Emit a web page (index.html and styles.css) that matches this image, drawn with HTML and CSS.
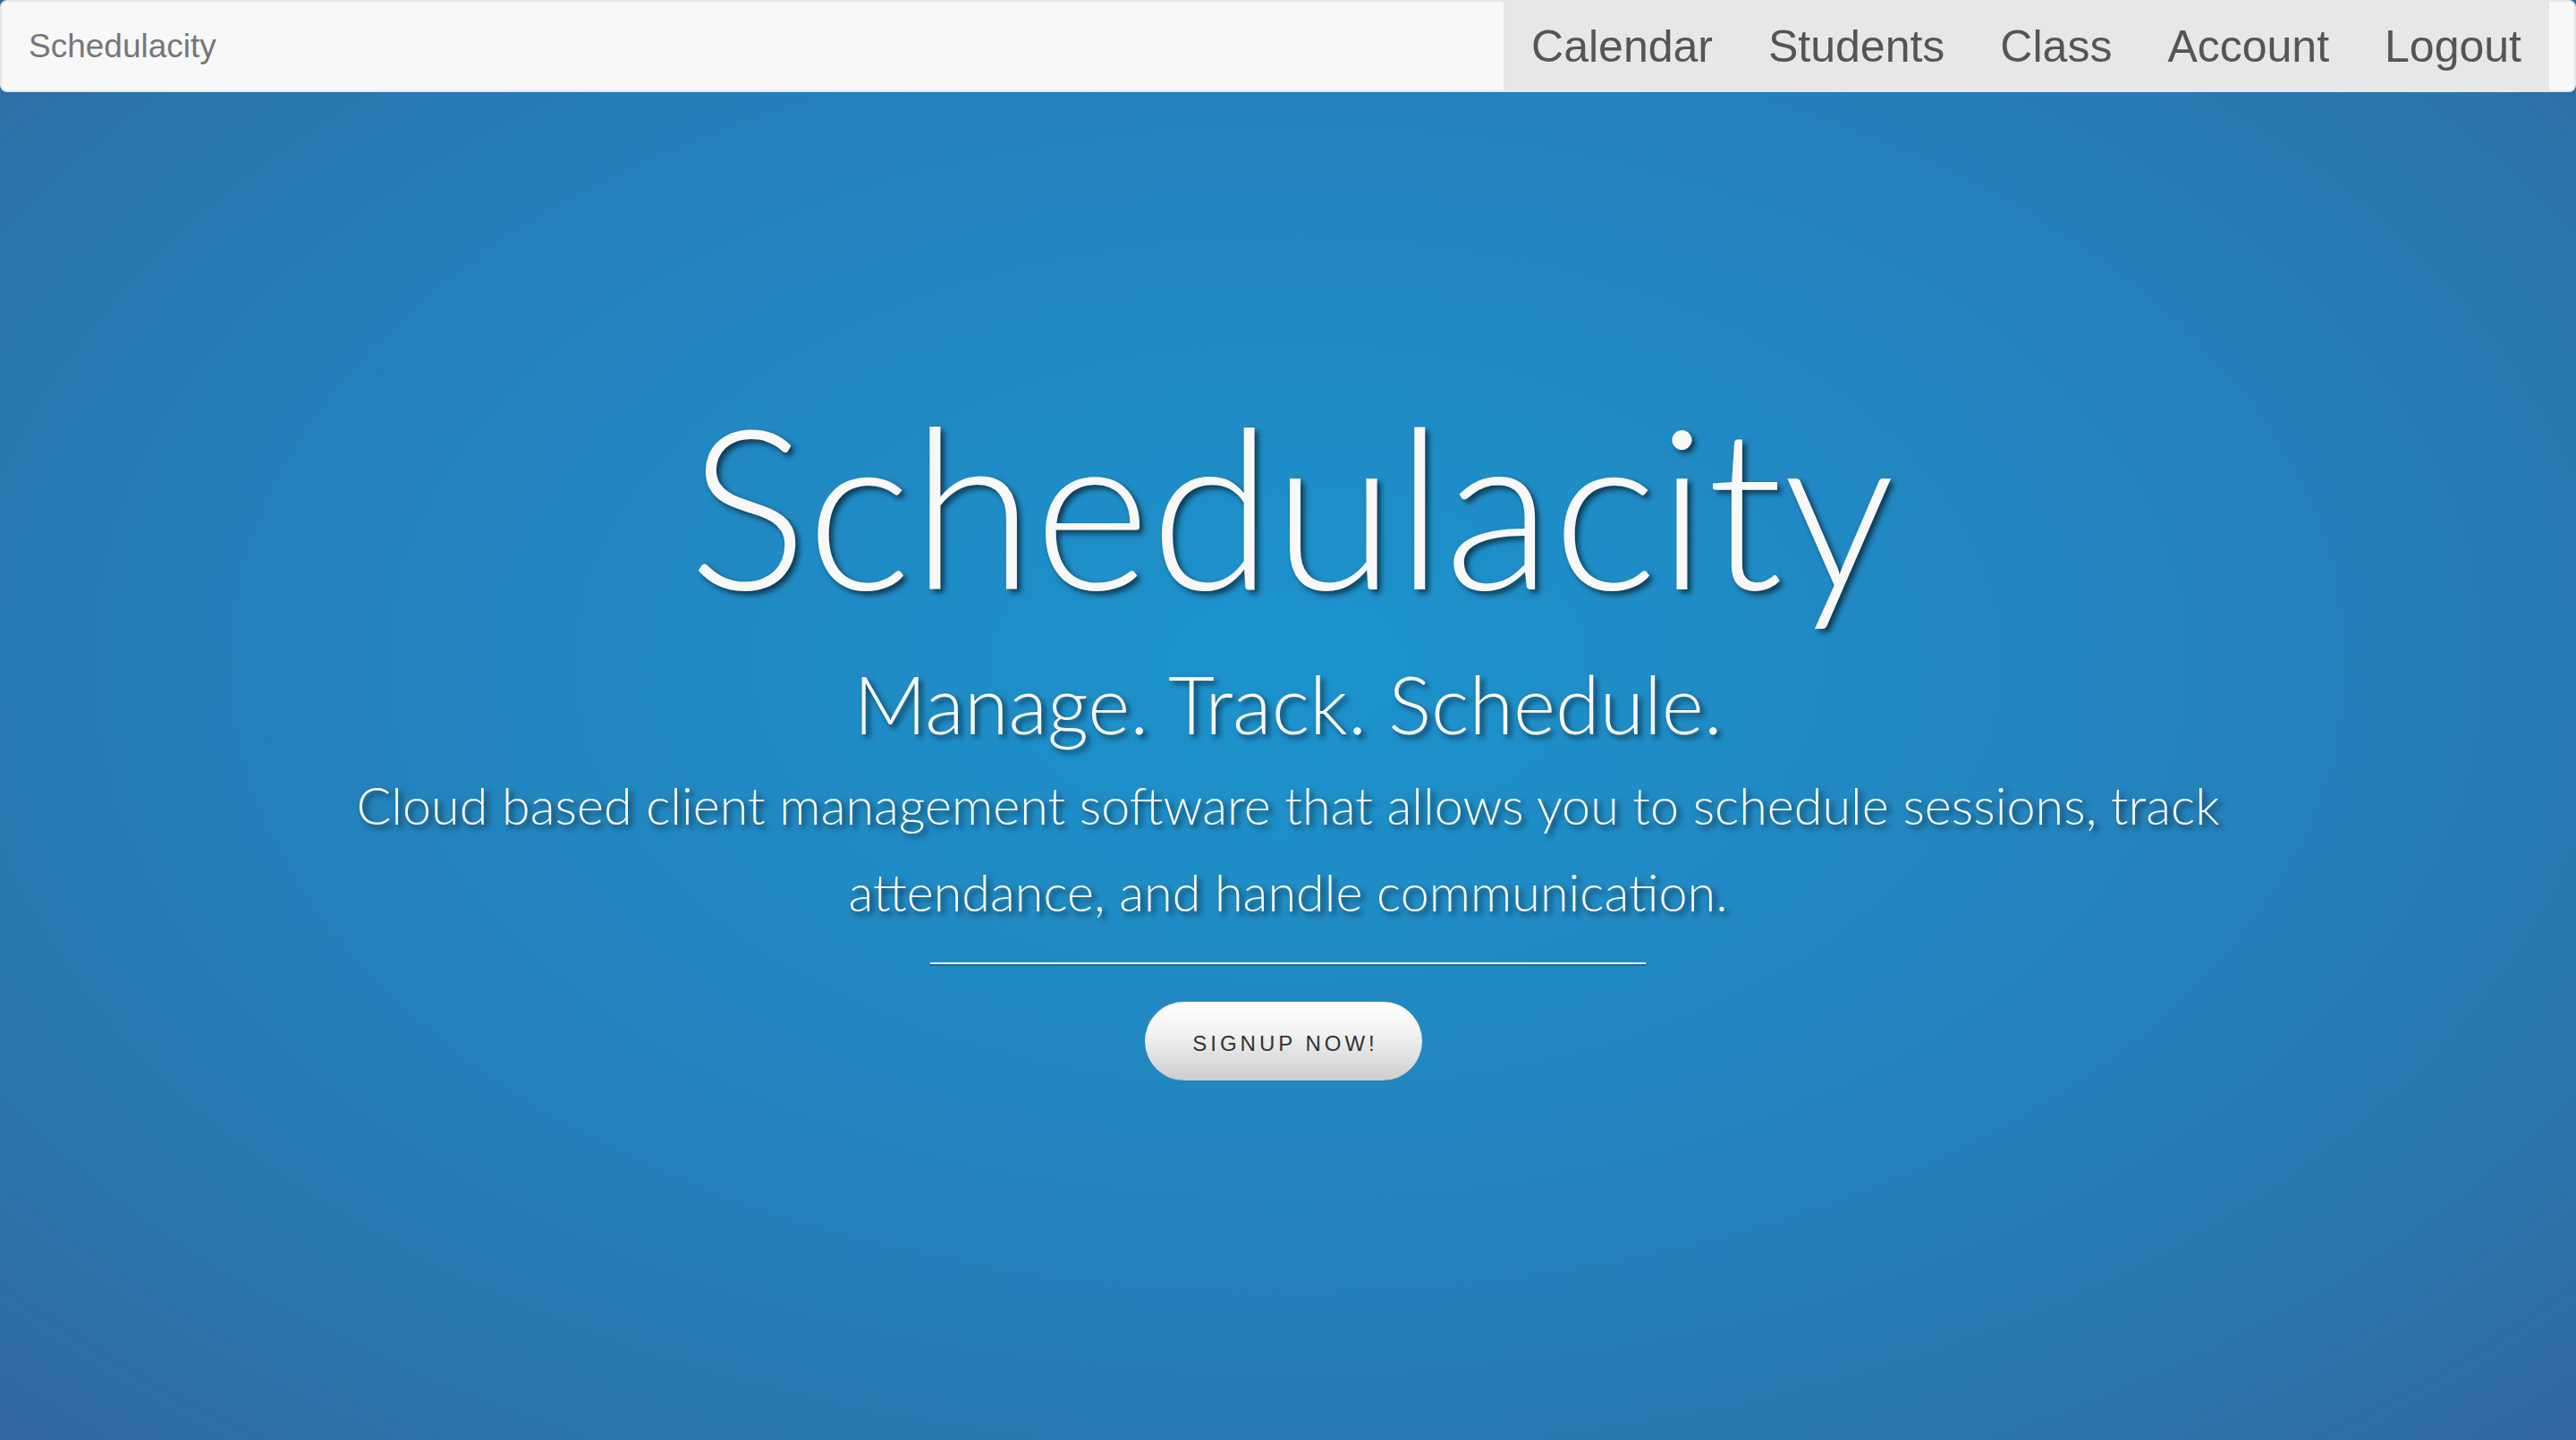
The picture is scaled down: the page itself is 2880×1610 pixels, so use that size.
FILE: index.html
```html
<!DOCTYPE html>
<html lang="en">
<head>
<meta charset="utf-8">
<title>Schedulacity</title>
<link rel="stylesheet" href="styles.css">
</head>
<body>
  <nav class="navbar">
    <a class="brand" href="#">Schedulacity</a>
    <ul class="nav">
      <li><a href="#">Calendar</a></li>
      <li><a href="#">Students</a></li>
      <li><a href="#">Class</a></li>
      <li><a href="#">Account</a></li>
      <li><a href="#">Logout</a></li>
    </ul>
  </nav>
  <section class="hero">
    <h1 class="title">Schedulacity</h1>
    <h3 class="subtitle">Manage. Track. Schedule.</h3>
    <p class="lead">Cloud based client management software that allows you to schedule sessions, track attendance, and handle communication.</p>
    <hr class="divider">
    <a class="cta" href="#">SIGNUP NOW!</a>
  </section>
</body>
</html>
```

FILE: styles.css
```css
html, body {
  margin: 0;
  padding: 0;
}

body {
  height: 1610px;
  overflow: hidden;
  background: radial-gradient(ellipse 75% 80% at 50% 46%, #1c93cd 0%, #2286c0 40%, #2a76ad 75%, #33639c 100%);
  font-family: "Liberation Sans", Arial, sans-serif;
}

.navbar {
  display: flex;
  justify-content: space-between;
  align-items: stretch;
  height: 99px;
  background: #f8f8f8;
  border: 2px solid #e7e7e7;
  border-radius: 8px;
  padding-right: 28px;
}

.brand {
  display: flex;
  align-items: center;
  padding: 0 30px;
  font-size: 37px;
  color: #777;
  text-decoration: none;
}

.nav {
  display: flex;
  margin: 0;
  padding: 0;
  list-style: none;
  background: #e7e7e7;
}

.nav a {
  display: flex;
  align-items: center;
  height: 100%;
  padding: 0 31px;
  font-size: 50px;
  color: #555;
  text-decoration: none;
}

.hero {
  display: flex;
  flex-direction: column;
  align-items: center;
  padding-top: 310px;
  color: #f8f8f8;
  font-family: Lato, "Open Sans", sans-serif;
  font-weight: 300;
  text-align: center;
}

.title {
  margin: 0;
  padding-left: 8px;
  font-size: 249px;
  line-height: 300px;
  font-weight: 300;
  text-shadow: 4px 4px 6px rgba(0, 0, 0, 0.6);
}

.subtitle {
  margin: 18px 0 0;
  font-size: 90px;
  line-height: 110px;
  font-weight: 300;
  text-shadow: 4px 4px 6px rgba(0, 0, 0, 0.6);
}

.lead {
  margin: 10px 0 0;
  max-width: 2200px;
  font-size: 57.5px;
  line-height: 97px;
  font-weight: 300;
  text-shadow: 4px 4px 6px rgba(0, 0, 0, 0.6);
}

.divider {
  width: 800px;
  margin: 31px 0 0;
  border: 0;
  border-top: 2px solid #f8f8f8;
  border-bottom: 2px solid rgba(0, 0, 0, 0.2);
}

.cta {
  display: flex;
  align-items: center;
  justify-content: center;
  box-sizing: border-box;
  width: 310px;
  height: 88px;
  margin: 40px 10px 0 0;
  padding: 5px 0 0 4px;
  border-radius: 44px;
  background: linear-gradient(to bottom, #ffffff 0%, #f2f2f2 40%, #cdcdcd 100%);
  font-family: "Liberation Sans", Arial, sans-serif;
  font-size: 24px;
  letter-spacing: 4px;
  color: #333;
  text-decoration: none;
}
```
